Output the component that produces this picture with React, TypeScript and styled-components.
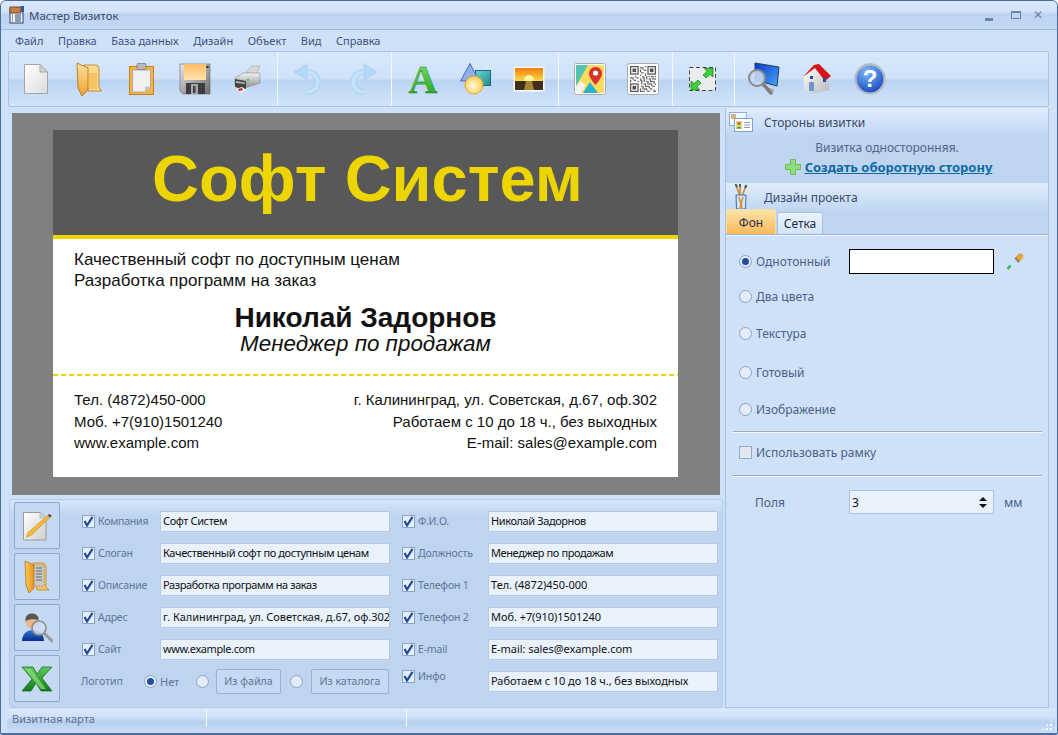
import React from 'react';
import styled, { createGlobalStyle } from 'styled-components';

const UI_FONT = '"Noto Sans", "DejaVu Sans", sans-serif';

const GlobalStyle = createGlobalStyle`
  html, body {
    margin: 0;
    padding: 0;
    background: #fff;
  }
  body {
    font-family: ${UI_FONT};
    font-size: 11px;
  }
  * {
    box-sizing: border-box;
  }
`;

/* ---------- icons ---------- */

function AppIcon() {
  return (
    <svg width="16" height="18" viewBox="0 0 16 18">
      <rect x="1" y="3" width="13" height="14" fill="#f4f6fb" stroke="#27406f" />
      <rect x="1" y="1" width="11" height="6" fill="#c9803f" stroke="#6d4a2a" />
      <rect x="12" y="0" width="3" height="6" fill="#2c57a8" />
      <path d="M3 9h1M6 9h6M3 11h1M6 11h6M3 13h1M6 13h6M3 15h1M6 15h6" stroke="#27406f" />
    </svg>
  );
}

function DocIcon() {
  return (
    <svg width="28" height="34" viewBox="0 0 28 34">
      <defs>
        <linearGradient id="docg" x1="0" y1="0" x2="1" y2="1">
          <stop offset="0" stopColor="#ffffff" />
          <stop offset="1" stopColor="#dcdcdc" />
        </linearGradient>
      </defs>
      <path d="M2.5 2.5H18L25.5 10V31.5H2.5Z" fill="url(#docg)" stroke="#a4a4a4" />
      <path d="M18 2.5V10H25.5Z" fill="#d2d2d2" stroke="#aaa" />
    </svg>
  );
}

function FolderIcon() {
  return (
    <svg width="28" height="36" viewBox="0 0 28 36">
      <defs>
        <linearGradient id="foldg" x1="0" y1="0" x2="0" y2="1">
          <stop offset="0" stopColor="#fde0a0" />
          <stop offset="1" stopColor="#eea22c" />
        </linearGradient>
      </defs>
      <path d="M9 4H22L24 7V27L27 30H13Z" fill="#fcd888" stroke="#b77b1a" strokeWidth=".8" />
      <path d="M2 2L13 7V29L7 35L3 27Z" fill="url(#foldg)" stroke="#a86c12" strokeWidth=".8" />
      <path d="M14 12H22V28H14Z" fill="#f5c266" />
    </svg>
  );
}

function PasteIcon() {
  return (
    <svg width="30" height="34" viewBox="0 0 30 34">
      <rect x="2.5" y="4.5" width="24" height="28" fill="#f6b24b" stroke="#c97f1c" />
      <path d="M5.5 8H23.5V25L18 30H5.5Z" fill="#efefef" stroke="#999" strokeWidth=".7" />
      <path d="M18 30V24.5H23.5Z" fill="#c6c6c6" />
      <rect x="10" y="1.5" width="9" height="6" rx="1" fill="#b9b9b9" stroke="#777" strokeWidth=".7" />
    </svg>
  );
}

function SaveIcon() {
  return (
    <svg width="32" height="32" viewBox="0 0 32 32">
      <defs>
        <linearGradient id="saveg" x1="0" y1="0" x2="0" y2="1">
          <stop offset="0" stopColor="#fdbd63" />
          <stop offset="1" stopColor="#fde3b0" />
        </linearGradient>
        <linearGradient id="savebody" x1="0" y1="0" x2="1" y2="1">
          <stop offset="0" stopColor="#e6e6e6" />
          <stop offset="1" stopColor="#6c6c6c" />
        </linearGradient>
      </defs>
      <path d="M1 1H31V31H4L1 28Z" fill="url(#savebody)" stroke="#666" strokeWidth=".6" />
      <rect x="5" y="1" width="22" height="16" fill="url(#saveg)" />
      <rect x="27.5" y="3" width="2" height="2" fill="#222" />
      <rect x="7" y="20" width="19" height="11" fill="#3d3d3d" />
      <rect x="12" y="21" width="7" height="10" fill="#a9a9a9" />
      <rect x="14" y="23" width="2.5" height="7" fill="#444" />
    </svg>
  );
}

function PrinterIcon() {
  return (
    <svg width="32" height="32" viewBox="0 0 32 32">
      <defs>
        <linearGradient id="printg" x1="0" y1="0" x2="0" y2="1">
          <stop offset="0" stopColor="#f2f2f2" />
          <stop offset="1" stopColor="#8c8c8c" />
        </linearGradient>
      </defs>
      <path d="M14 9L20 3H28L24 12Z" fill="#d8d8d8" stroke="#aaa" strokeWidth=".6" />
      <path d="M3 15L11 10H28L28 20L12 25L3 22Z" fill="url(#printg)" stroke="#777" strokeWidth=".5" />
      <path d="M3 16L14 18V27L3 24Z" fill="#444" />
      <path d="M4 18L13 19.5V21L4 20Z" fill="#b5b5b5" />
      <rect x="15" y="16" width="2" height="2" fill="#35c43d" />
      <path d="M4 26L10 24L15 27L9 30Z" fill="#f1f1f1" />
      <path d="M6 26L10 25L11 27L7 28Z" fill="#d81e1e" />
    </svg>
  );
}

function UndoIcon({ flip }: { flip?: boolean }) {
  return (
    <svg width="32" height="32" viewBox="0 0 32 32" style={flip ? { transform: 'scaleX(-1)' } : undefined}>
      <path d="M12 9.5A10 10 0 1 1 13 29" fill="none" stroke="#b0d6f4" strokeWidth="6.4" />
      <path d="M12 9.5A10 10 0 1 1 13 29" fill="none" stroke="#c6e2f8" strokeWidth="3.4" />
      <path d="M1 9L14 1V17Z" fill="#b4d8f5" stroke="#a6d0f1" strokeWidth=".7" />
    </svg>
  );
}

function LetterIcon() {
  return (
    <svg width="36" height="44" viewBox="0 0 36 44">
      <defs>
        <linearGradient id="letterg" x1="0" y1="0" x2="0" y2="1">
          <stop offset="0" stopColor="#86e46a" />
          <stop offset="1" stopColor="#169b1c" />
        </linearGradient>
      </defs>
      <text x="18" y="36" textAnchor="middle" fontFamily="'Liberation Serif', serif" fontWeight="700" fontSize="40" fill="url(#letterg)" stroke="#1a7f1c" strokeWidth=".4">
        A
      </text>
    </svg>
  );
}

function ShapesIcon() {
  return (
    <svg width="34" height="34" viewBox="0 0 34 34">
      <defs>
        <linearGradient id="shapeg" x1="0" y1="0" x2="1" y2="1">
          <stop offset="0" stopColor="#6fd6d2" />
          <stop offset="1" stopColor="#1f8a92" />
        </linearGradient>
        <radialGradient id="circg" cx=".45" cy=".55" r=".6">
          <stop offset="0" stopColor="#fffbe0" />
          <stop offset="1" stopColor="#f9c945" />
        </radialGradient>
      </defs>
      <rect x="16.5" y="8.5" width="15" height="15" fill="url(#shapeg)" stroke="#146a70" />
      <path d="M11 1.5L20 19H1.5Z" fill="#8fb0ea" stroke="#4a6fb8" />
      <circle cx="15" cy="23" r="9" fill="url(#circg)" stroke="#e3a52a" />
    </svg>
  );
}

function SunsetIcon() {
  return (
    <svg width="32" height="26" viewBox="0 0 32 26">
      <defs>
        <linearGradient id="skyg" x1="0" y1="0" x2="0" y2="1">
          <stop offset="0" stopColor="#f07d0b" />
          <stop offset="1" stopColor="#ffd84a" />
        </linearGradient>
      </defs>
      <rect x=".5" y=".5" width="31" height="25" fill="#fff" stroke="#e8e8e8" />
      <rect x="2" y="2" width="28" height="13" fill="url(#skyg)" />
      <circle cx="16" cy="14" r="5" fill="#fff2a0" />
      <rect x="2" y="15" width="28" height="9" fill="#3f2f1d" />
      <path d="M13 15H19L21 24H11Z" fill="#a98432" />
    </svg>
  );
}

function MapIcon() {
  return (
    <svg width="32" height="32" viewBox="0 0 32 32">
      <rect x=".5" y=".5" width="31" height="31" rx="2" fill="#fff" stroke="#aaa" />
      <rect x="2" y="2" width="28" height="28" fill="#fadb5e" />
      <path d="M2 2H14L2 23Z" fill="#4fc5b0" />
      <path d="M9 30L16 19L24 30Z" fill="#27b3cf" />
      <path d="M2 30V24L6 18L12 22L7 30Z" fill="#f2f2f2" />
      <path d="M21.5 4C17.5 4 15 7 15 10.5C15 15 21.5 22 21.5 22C21.5 22 28 15 28 10.5C28 7 25.5 4 21.5 4Z" fill="#d9322e" />
      <circle cx="21.5" cy="10" r="2.6" fill="#fff" />
    </svg>
  );
}

const QR_BITS = Array.from({ length: 21 * 21 }, (_, i) => (i * i * 7 + i * 13 + ((i * 31) >> 3)) % 5 < 2);

function inFinder(x: number, y: number) {
  return (x < 8 && y < 8) || (x > 12 && y < 8) || (x < 8 && y > 12);
}

function QrIcon() {
  return (
    <svg width="32" height="32" viewBox="0 0 32 32">
      <rect x=".5" y=".5" width="31" height="31" rx="2" fill="#fff" stroke="#aaa" />
      <g fill="#555" transform="translate(3 3) scale(1.24)">
        {QR_BITS.map((on, i) => {
          const x = i % 21;
          const y = Math.floor(i / 21);
          return on && !inFinder(x, y) ? <rect key={i} x={x} y={y} width="1" height="1" /> : null;
        })}
        {[[0, 0], [14, 0], [0, 14]].map(([x, y]) => (
          <g key={`${x}-${y}`}>
            <rect x={x + 0.5} y={y + 0.5} width="6" height="6" fill="none" stroke="#555" />
            <rect x={x + 2} y={y + 2} width="3" height="3" />
          </g>
        ))}
      </g>
    </svg>
  );
}

function ResizeIcon() {
  return (
    <svg width="30" height="28" viewBox="0 0 30 28">
      <rect x="1.5" y="2.5" width="26" height="23" fill="#ececec" stroke="#444" strokeDasharray="4 2.5" />
      <path d="M25 3L25 12L22 9.5L18 13L15 10L19 6.5L16.5 3.5Z" fill="#3fd03f" stroke="#0f7a1a" strokeWidth=".7" />
      <path d="M3 25L3 16L6 18.5L10 15L13 18L9 21.5L11.5 24.5Z" fill="#3fd03f" stroke="#0f7a1a" strokeWidth=".7" />
    </svg>
  );
}

function ScreenIcon() {
  return (
    <svg width="34" height="34" viewBox="0 0 34 34">
      <defs>
        <linearGradient id="scrg" x1="0" y1="0" x2="1" y2="1">
          <stop offset="0" stopColor="#0a3bc8" />
          <stop offset="1" stopColor="#47a7f7" />
        </linearGradient>
      </defs>
      <path d="M8 1L32 5L30 24L8 18Z" fill="url(#scrg)" stroke="#2a3f57" />
      <path d="M18 25L27 27V30L20 30Z" fill="#a8a8a8" opacity=".8" />
      <line x1="16" y1="22" x2="24" y2="31" stroke="#7e7e7e" strokeWidth="3.4" strokeLinecap="round" />
      <circle cx="10" cy="16" r="8" fill="#c7d6f3" fillOpacity=".9" stroke="#8a8a8a" strokeWidth="2" />
    </svg>
  );
}

function HomeIcon() {
  return (
    <svg width="32" height="32" viewBox="0 0 32 32">
      <defs>
        <linearGradient id="homeg" x1="0" y1="0" x2="1" y2="1">
          <stop offset="0" stopColor="#ffffff" />
          <stop offset="1" stopColor="#b8b8b8" />
        </linearGradient>
      </defs>
      <path d="M3 13L13 4L23 10L28 17V27L12 31L3 27Z" fill="url(#homeg)" />
      <path d="M2 14L13 2L18 1L30 13L24 18L14 5Z" fill="#d5141c" />
      <rect x="8" y="19" width="5" height="9" fill="#6e95cf" />
      <rect x="9" y="13" width="3" height="3" fill="#2050a8" />
      <rect x="22" y="15" width="3" height="4" fill="#2050a8" />
    </svg>
  );
}

function HelpIcon() {
  return (
    <svg width="32" height="32" viewBox="0 0 32 32">
      <defs>
        <radialGradient id="helpg" cx=".4" cy=".25" r=".85">
          <stop offset="0" stopColor="#7fb8f5" />
          <stop offset="1" stopColor="#0b3ebd" />
        </radialGradient>
      </defs>
      <circle cx="16" cy="16" r="14.5" fill="url(#helpg)" stroke="#b5b9c2" strokeWidth="2.4" />
      <text x="16" y="24" textAnchor="middle" fontFamily="'Liberation Sans', sans-serif" fontWeight="700" fontSize="24" fill="#fff">
        ?
      </text>
    </svg>
  );
}

function CardsIcon() {
  return (
    <svg width="24" height="20" viewBox="0 0 24 20">
      <rect x=".5" y=".5" width="17" height="13" fill="#f2f7fe" stroke="#8daed7" />
      <rect x="2" y="2" width="5" height="5" fill="#d9b07f" />
      <rect x="5.5" y="6.5" width="18" height="13" fill="#fdfeff" stroke="#7ba3d3" />
      <rect x="7" y="9" width="6" height="8" fill="#ecd67a" />
      <circle cx="10" cy="11.5" r="1.8" fill="#b57a33" />
      <path d="M7.5 16.5C8 14 12 14 12.5 16.5Z" fill="#3a9a4a" />
      <path d="M15 10.5h6M15 13h6M15 15.5h6" stroke="#8b9bb3" />
    </svg>
  );
}

function BrushCupIcon() {
  return (
    <svg width="16" height="26" viewBox="0 0 16 26">
      <path d="M3 1L7 12M13 2L9 12M7 0V12" stroke="#c98b34" strokeWidth="1.6" />
      <path d="M2.5 0L4 3M13.5 1L12 4M7 0V3" stroke="#555" strokeWidth="2" />
      <path d="M3 11H13L12.5 25H3.5Z" fill="#cfe5f8" stroke="#3c6fa8" />
      <path d="M6 13L9 24M10 13L7 24" stroke="#dc8b2b" strokeWidth="1.4" />
    </svg>
  );
}

function PlusIcon() {
  return (
    <svg width="16" height="16" viewBox="0 0 16 16">
      <path d="M5.5 .5H10.5V5.5H15.5V10.5H10.5V15.5H5.5V10.5H.5V5.5H5.5Z" fill="#8fdc7c" stroke="#6dbb5c" />
    </svg>
  );
}

function DropperIcon() {
  return (
    <svg width="18" height="18" viewBox="0 0 18 18">
      <path d="M9 5L13 9" stroke="#777" strokeWidth="2" />
      <path d="M10 4L13 1.5C14 .6 16 1 16.5 2C17 3 17 4 16 5L13.5 8Z" fill="#f5a623" stroke="#c37f10" strokeWidth=".6" />
      <path d="M10 7L3 14" stroke="#bfe6f5" strokeWidth="3" />
      <path d="M4.5 12.5L1.5 16" stroke="#3cb54a" strokeWidth="2.4" />
    </svg>
  );
}

function NoteIcon() {
  return (
    <svg width="32" height="32" viewBox="0 0 32 32">
      <defs>
        <linearGradient id="noteg" x1="0" y1="0" x2="1" y2="1">
          <stop offset="0" stopColor="#ffffff" />
          <stop offset="1" stopColor="#cfcfcf" />
        </linearGradient>
      </defs>
      <path d="M2.5 2.5H19L25 8V30H2.5Z" fill="url(#noteg)" stroke="#9a9a9a" />
      <path d="M19 2.5V8H25Z" fill="#d8d8d8" stroke="#aaa" strokeWidth=".6" />
      <path d="M28.5 4L30.5 6L10 25.5L5.5 27L7 22.5Z" fill="#f4b93a" stroke="#c98a19" strokeWidth=".6" />
      <path d="M28.5 4L30.5 6L29 7.5L27 5.5Z" fill="#2f4a86" />
    </svg>
  );
}

function FolderDocsIcon() {
  return (
    <svg width="26" height="34" viewBox="0 0 26 34">
      <defs>
        <linearGradient id="fdg" x1="0" y1="0" x2="1" y2="0">
          <stop offset="0" stopColor="#fbc95e" />
          <stop offset="1" stopColor="#e7961c" />
        </linearGradient>
      </defs>
      <path d="M9 3H20L22 6V27L25 30H13Z" fill="#f7c465" stroke="#b77b1a" strokeWidth=".7" />
      <path d="M9 5H20V26H9Z" fill="#c9c9c9" stroke="#777" strokeWidth=".5" strokeDasharray="2 1" />
      <path d="M12 8H18M12 11H18M12 14H18M12 17H18M12 20H18" stroke="#666" />
      <path d="M1 1L10 5V28L5 33L2 25Z" fill="url(#fdg)" stroke="#a86c12" strokeWidth=".7" />
    </svg>
  );
}

function UserSearchIcon() {
  return (
    <svg width="32" height="32" viewBox="0 0 32 32">
      <defs>
        <linearGradient id="userg" x1="0" y1="0" x2="0" y2="1">
          <stop offset="0" stopColor="#2f78d8" />
          <stop offset="1" stopColor="#0a2a8a" />
        </linearGradient>
      </defs>
      <path d="M1 29C1 21 7 18 12 18C17 18 23 21 23 29Z" fill="url(#userg)" />
      <circle cx="11" cy="10" r="6.5" fill="#e9b78c" />
      <path d="M4.5 9C4 3 8 1.5 11 1.5C15 1.5 18 4 17.5 8C14 7 8 7 4.5 9Z" fill="#5a5650" />
      <line x1="23" y1="21" x2="31" y2="29" stroke="#9a9a9a" strokeWidth="3" strokeLinecap="round" />
      <circle cx="18" cy="16" r="7" fill="#cfdcf5" fillOpacity=".85" stroke="#8b8b8b" strokeWidth="1.6" />
    </svg>
  );
}

function ExcelIcon() {
  return (
    <svg width="32" height="26" viewBox="0 0 32 26">
      <defs>
        <linearGradient id="xlg" x1="0" y1="0" x2="0" y2="1">
          <stop offset="0" stopColor="#5cc95a" />
          <stop offset="1" stopColor="#127a18" />
        </linearGradient>
      </defs>
      <path d="M1 1H12L16 8L21 1H31L21 12L31 25H20L15 17L10 25H1L11 13Z" fill="url(#xlg)" stroke="#0e6a16" strokeWidth=".7" />
      <path d="M4 3H10L25 23H20Z" fill="#8fe07f" opacity=".7" />
    </svg>
  );
}

/* ---------- window ---------- */

const Window = styled.div`
  width: 1058px;
  height: 735px;
  display: flex;
  flex-direction: column;
  overflow: hidden;
  background: #cfe1f8;
  border: 1px solid #4a6d9c;
  border-bottom-width: 2px;
  border-radius: 6px 6px 2px 2px;
`;

const TitleBar = styled.div`
  height: 29px;
  flex: none;
  display: flex;
  align-items: center;
  padding: 0 14px 0 8px;
  background: linear-gradient(#dbe8fb 0, #d2e3f9 11px, #bcd3f2 13px, #c2d8f4 28px);
  border-bottom: 1px solid #a2bbdb;
`;

const TitleText = styled.span`
  margin-left: 4px;
  font-size: 11.5px;
  color: #3e4a68;
`;

const WindowButtons = styled.div`
  margin-left: auto;
  display: flex;
  align-items: center;
`;

const MinButton = styled.span`
  width: 8px;
  height: 3px;
  margin-top: 8px;
  background: #6c84a6;
`;

const MaxButton = styled.span`
  width: 10px;
  height: 8px;
  margin-left: 18px;
  border: 1px solid #6c84a6;
  border-top-width: 2px;
`;

const CloseGlyph = styled.span`
  margin-left: 12px;
  font-family: 'DejaVu Sans', sans-serif;
  font-size: 12px;
  font-weight: 700;
  line-height: 12px;
  color: #6c84a6;
`;

const MenuBar = styled.div`
  height: 21px;
  flex: none;
  display: flex;
  align-items: center;
  gap: 14.5px;
  padding: 0 0 0 14px;
  color: #3d5180;
`;

const Toolbar = styled.div`
  height: 56px;
  flex: none;
  margin: 0 8px 0 7px;
  display: flex;
  border: 1px solid #a9c3e4;
  border-radius: 2px;
  background: linear-gradient(#d8e8fc 0, #cfe2fa 26px, #bad3f3 29px, #c6dbf6 40px, #d0e3fa 54px);
`;

const ToolGroup = styled.div<{ $pad: number; $width?: number }>`
  display: flex;
  align-items: center;
  padding-left: ${(p) => p.$pad}px;
  width: ${(p) => (p.$width ? `${p.$width}px` : 'auto')};
  flex: ${(p) => (p.$width ? 'none' : 1)};
  border-right: ${(p) => (p.$width ? '1px solid #f2f7fe' : 'none')};
`;

const ToolButton = styled.div`
  width: 53px;
  height: 54px;
  flex: none;
  display: flex;
  align-items: center;
  justify-content: center;
`;

const Main = styled.div`
  flex: 1;
  min-height: 0;
  display: flex;
  padding: 0 7px;
`;

const LeftColumn = styled.div`
  width: 715px;
  flex: none;
  display: flex;
  flex-direction: column;
`;

const Preview = styled.div`
  height: 382px;
  margin: 6px 3px 0 4px;
  padding: 17px 0 0 41px;
  flex: none;
  display: flex;
  align-items: flex-start;
  background: #808080;
`;

const Card = styled.div`
  width: 625px;
  height: 347px;
  display: flex;
  flex-direction: column;
  background: #fff;
  color: #111;
  font-family: 'Liberation Sans', Arial, sans-serif;
`;

const CardHead = styled.div`
  height: 109px;
  flex: none;
  display: flex;
  align-items: center;
  justify-content: center;
  padding: 0 0 8px 4px;
  background: #585858;
  border-bottom: 4px solid #ecd500;
  color: #ecd500;
  font-size: 65px;
  font-weight: 700;
`;

const CardLines = styled.div`
  padding: 10px 21px 0;
  font-size: 17px;
  line-height: 21px;
`;

const CardName = styled.div`
  margin-top: 13px;
  text-align: center;
  font-size: 28px;
  font-weight: 700;
  line-height: 28px;
`;

const CardRole = styled.div`
  margin-top: -1px;
  text-align: center;
  font-size: 22.4px;
  font-style: italic;
  line-height: 26px;
`;

const DashedLine = styled.div`
  height: 2px;
  margin-top: 17px;
  flex: none;
  background: repeating-linear-gradient(90deg, #ecd500 0 5px, transparent 5px 8px);
`;

const CardContacts = styled.div`
  padding: 13px 21px 0;
  display: flex;
  justify-content: space-between;
  font-size: 15px;
  line-height: 21.5px;
`;

const RightAligned = styled.div`
  text-align: right;
`;

/* ---------- data panel ---------- */

const DataPanel = styled.div`
  height: 209px;
  margin: 4px 0 0 1px;
  flex: none;
  display: flex;
  padding: 2px 0 0 4px;
  background: linear-gradient(#d7e6fa 0, #bfd4ef 16px);
  border: 1px solid #b6cdea;
  border-radius: 3px;
`;

const SideButtons = styled.div`
  width: 46px;
  flex: none;
  display: flex;
  flex-direction: column;
  gap: 4px;
`;

const SideButton = styled.div`
  height: 47px;
  flex: none;
  display: flex;
  align-items: center;
  justify-content: center;
  border: 1px solid #8ea9cf;
  border-radius: 2px;
  background: #c5d9f2;
`;

const FormColumn = styled.div<{ $left: number; $labelWidth: number }>`
  width: ${(p) => p.$labelWidth + 230}px;
  flex: none;
  margin-left: ${(p) => p.$left}px;
  padding-top: 3px;
  display: flex;
  flex-direction: column;
  --label-width: ${(p) => p.$labelWidth}px;
`;

const FormRow = styled.div`
  height: 32px;
  display: flex;
  align-items: center;
`;

const FieldLabel = styled.label<{ $shift?: number }>`
  width: var(--label-width);
  flex: none;
  display: flex;
  align-items: center;
  gap: 3px;
  font-size: 10.5px;
  letter-spacing: -0.2px;
  color: #5e7699;
  transform: translateY(${(p) => p.$shift || 0}px);
`;

const Check = styled.span`
  width: 13px;
  height: 13px;
  flex: none;
  display: flex;
  align-items: center;
  justify-content: center;
  border: 1px solid #8da4c4;
  background: #e6eef9;
`;

function CheckMark() {
  return (
    <svg width="11" height="11" viewBox="0 0 11 11">
      <path d="M1.5 5L4 9.5L9.5 .8" fill="none" stroke="#1b4ea3" strokeWidth="2.2" />
    </svg>
  );
}

const FieldValue = styled.div<{ $tight?: boolean }>`
  width: 230px;
  height: 21px;
  flex: none;
  padding: 0 2px;
  overflow: hidden;
  white-space: nowrap;
  line-height: 18px;
  letter-spacing: ${(p) => (p.$tight ? '-0.4px' : '-0.05px')};
  color: #111;
  background: #e8f1fc;
  border: 1px solid #b3c9e6;
`;

const LogoLabel = styled.span`
  width: 62px;
  margin-left: -1px;
  flex: none;
  margin-right: 1px;
  font-size: 10.5px;
  color: #5e7699;
`;

const Radio = styled.span<{ $on?: boolean; $left?: number }>`
  width: 13px;
  height: 13px;
  flex: none;
  margin-left: ${(p) => p.$left || 0}px;
  display: inline-flex;
  align-items: center;
  justify-content: center;
  border: 1px solid #8aa3c6;
  border-radius: 50%;
  background: #e3ecf8;
  &::after {
    content: '';
    width: 7px;
    height: 7px;
    border-radius: 50%;
    background: ${(p) => (p.$on ? '#1d4f9c' : 'transparent')};
  }
`;

const LogoNone = styled.span`
  width: 36px;
  margin-left: 3px;
  color: #5e7699;
`;

const SmallButton = styled.div<{ $width: number; $left: number }>`
  width: ${(p) => p.$width}px;
  height: 25px;
  flex: none;
  margin-left: ${(p) => p.$left}px;
  display: flex;
  align-items: center;
  justify-content: center;
  font-size: 10.6px;
  color: #5e7699;
  background: #c5d9f2;
  border: 1px solid #98b2d6;
  border-radius: 2px;
`;

/* ---------- right panel ---------- */

const RightPanel = styled.div`
  width: 324px;
  margin: 1px 0 1px 2px;
  flex: none;
  display: flex;
  flex-direction: column;
  font-size: 12px;
  background: #cfe1f8;
  border: 1px solid #a9c3e4;
  border-top: none;
`;

const SectionHeader = styled.div<{ $height: number; $drop: number }>`
  height: ${(p) => p.$height}px;
  padding-top: ${(p) => p.$drop}px;
  flex: none;
  display: flex;
  align-items: center;
  color: #3b4a6e;
  background: linear-gradient(#dfecfc, #c3d8f3);
`;

const SectionIcon = styled.span`
  width: 38px;
  flex: none;
  display: flex;
  justify-content: center;
  padding-right: 8px;
`;

const SidesInfo = styled.div`
  height: 48px;
  flex: none;
  display: flex;
  flex-direction: column;
  align-items: center;
  padding-top: 4px;
  gap: 2px;
  background: #bfd4ef;
  color: #50648c;
`;

const CreateLink = styled.div`
  margin-left: 3px;
  display: flex;
  align-items: center;
  gap: 4px;
  font-size: 13px;
  font-weight: 700;
  color: #0f6aa3;
  text-decoration: underline;
`;

const TabStrip = styled.div`
  height: 26px;
  flex: none;
  display: flex;
  align-items: flex-end;
  background: #bfd4ef;
  border-bottom: 1px solid #94b3da;
`;

const Tab = styled.div<{ $active?: boolean }>`
  display: flex;
  align-items: center;
  justify-content: center;
  width: ${(p) => (p.$active ? 50 : 46)}px;
  height: ${(p) => (p.$active ? 25 : 22)}px;
  margin-right: 1px;
  color: #1d2a44;
  background: ${(p) =>
    p.$active ? 'linear-gradient(#fde3a8, #fbb95a)' : 'linear-gradient(#eaf2fc, #d3e3f8)'};
  border: 1px solid ${(p) => (p.$active ? '#f5dcae' : '#a9c3e4')};
  border-bottom: none;
  border-radius: 2px 2px 0 0;
`;

const TabBody = styled.div`
  flex: 1;
  padding: 13px 6px 0 13px;
  display: flex;
  flex-direction: column;
  border-top: 1px solid #f2f7fe;
  color: #4c5f88;
`;

const OptionRow = styled.div<{ $height: number; $after?: number }>`
  height: ${(p) => p.$height}px;
  margin-bottom: ${(p) => p.$after || 0}px;
  flex: none;
  display: flex;
  align-items: center;
  gap: 4px;
`;

const OptionLabel = styled.span`
  width: 89px;
  flex: none;
`;

const ColorBox = styled.div`
  width: 145px;
  height: 25px;
  flex: none;
  background: #fff;
  border: 1px solid #000;
`;

const DropperSlot = styled.span`
  margin-left: 8px;
  display: flex;
`;

const Divider = styled.div`
  height: 2px;
  flex: none;
  margin-left: -6px;
  border-top: 1px solid #a9a9a9;
  border-bottom: 1px solid #f4f8fe;
`;

const FrameCheck = styled.span`
  width: 13px;
  height: 13px;
  flex: none;
  border: 1px solid #94a9c6;
  background: #e2e8f0;
`;

const MarginRow = styled.div`
  height: 50px;
  display: flex;
  align-items: center;
  padding: 0 0 0 16px;
`;

const MarginLabel = styled.span`
  width: 94px;
  flex: none;
`;

const Spinner = styled.div`
  width: 145px;
  height: 24px;
  flex: none;
  display: flex;
  align-items: center;
  justify-content: space-between;
  padding: 0 6px 0 2px;
  color: #111;
  background: #e8f1fc;
  border: 1px solid #a9c3e4;
`;

const SpinArrows = styled.span`
  display: flex;
  flex-direction: column;
  gap: 3px;
`;

const ArrowUp = styled.span`
  width: 0;
  height: 0;
  border: 4px solid transparent;
  border-top: none;
  border-bottom: 4px solid #111;
`;

const ArrowDown = styled.span`
  width: 0;
  height: 0;
  border: 4px solid transparent;
  border-bottom: none;
  border-top: 4px solid #111;
`;

const Unit = styled.span`
  margin-left: 10px;
`;

/* ---------- status bar ---------- */

const StatusBar = styled.div`
  height: 24px;
  flex: none;
  margin: 0 2px 0 6px;
  display: flex;
  position: relative;
  color: #5a6f94;
  background: linear-gradient(#dbe8fb 0, #cfe1f8 8px, #b7cff0 13px, #cbdef8 24px);
`;

const StatusCell = styled.div<{ $width: number }>`
  width: ${(p) => p.$width}px;
  height: 18px;
  flex: none;
  padding: 2px 0 0 5px;
  border-right: 1px solid #f2f7fe;
`;

const Grip = styled.span`
  position: absolute;
  right: 2px;
  bottom: 2px;
  width: 12px;
  height: 12px;
  background-image: radial-gradient(circle, #fff 1px, transparent 1.2px);
  background-size: 4px 4px;
  clip-path: polygon(100% 0, 100% 100%, 0 100%);
`;

interface IField {
  label: string;
  value: string;
  tight?: boolean;
  shift?: number;
}

const leftFields: IField[] = [
  { label: 'Компания', value: 'Софт Систем', tight: true },
  { label: 'Слоган', value: 'Качественный софт по доступным ценам', tight: true },
  { label: 'Описание', value: 'Разработка программ на заказ', tight: true },
  { label: 'Адрес', value: 'г. Калининград, ул. Советская, д.67, оф.302' },
  { label: 'Сайт', value: 'www.example.com', tight: true },
];

const rightFields: IField[] = [
  { label: 'Ф.И.О.', value: 'Николай Задорнов', tight: true },
  { label: 'Должность', value: 'Менеджер по продажам', tight: true },
  { label: 'Телефон 1', value: 'Тел. (4872)450-000' },
  { label: 'Телефон 2', value: 'Моб. +7(910)1501240' },
  { label: 'E-mail', value: 'E-mail: sales@example.com' },
  { label: 'Инфо', value: 'Работаем с 10 до 18 ч., без выходных', shift: -5 },
];

const menuItems = ['Файл', 'Правка', 'База данных', 'Дизайн', 'Объект', 'Вид', 'Справка'];

function Field({ label, value, tight, shift }: IField) {
  return (
    <FormRow>
      <FieldLabel $shift={shift}>
        <Check>
          <CheckMark />
        </Check>
        {label}
      </FieldLabel>
      <FieldValue $tight={tight}>{value}</FieldValue>
    </FormRow>
  );
}

export default function App() {
  return (
    <>
      <GlobalStyle />
      <Window>
        <TitleBar>
          <AppIcon />
          <TitleText>Мастер Визиток</TitleText>
          <WindowButtons>
            <MinButton />
            <MaxButton />
            <CloseGlyph>✕</CloseGlyph>
          </WindowButtons>
        </TitleBar>

        <MenuBar>
          {menuItems.map((item) => (
            <span key={item}>{item}</span>
          ))}
        </MenuBar>

        <Toolbar>
          <ToolGroup $pad={0} $width={269}>
            <ToolButton><DocIcon /></ToolButton>
            <ToolButton><FolderIcon /></ToolButton>
            <ToolButton><PasteIcon /></ToolButton>
            <ToolButton><SaveIcon /></ToolButton>
            <ToolButton><PrinterIcon /></ToolButton>
          </ToolGroup>
          <ToolGroup $pad={4} $width={114}>
            <ToolButton><UndoIcon /></ToolButton>
            <ToolButton><UndoIcon flip /></ToolButton>
          </ToolGroup>
          <ToolGroup $pad={4} $width={167}>
            <ToolButton><LetterIcon /></ToolButton>
            <ToolButton><ShapesIcon /></ToolButton>
            <ToolButton><SunsetIcon /></ToolButton>
          </ToolGroup>
          <ToolGroup $pad={4} $width={114}>
            <ToolButton><MapIcon /></ToolButton>
            <ToolButton><QrIcon /></ToolButton>
          </ToolGroup>
          <ToolGroup $pad={3} $width={62}>
            <ToolButton><ResizeIcon /></ToolButton>
          </ToolGroup>
          <ToolGroup $pad={2}>
            <ToolButton><ScreenIcon /></ToolButton>
            <ToolButton><HomeIcon /></ToolButton>
            <ToolButton><HelpIcon /></ToolButton>
          </ToolGroup>
        </Toolbar>

        <Main>
          <LeftColumn>
            <Preview>
              <Card>
                <CardHead>Софт Систем</CardHead>
                <CardLines>
                  <div>Качественный софт по доступным ценам</div>
                  <div>Разработка программ на заказ</div>
                </CardLines>
                <CardName>Николай Задорнов</CardName>
                <CardRole>Менеджер по продажам</CardRole>
                <DashedLine />
                <CardContacts>
                  <div>
                    <div>Тел. (4872)450-000</div>
                    <div>Моб. +7(910)1501240</div>
                    <div>www.example.com</div>
                  </div>
                  <RightAligned>
                    <div>г. Калининград, ул. Советская, д.67, оф.302</div>
                    <div>Работаем с 10 до 18 ч., без выходных</div>
                    <div>E-mail: sales@example.com</div>
                  </RightAligned>
                </CardContacts>
              </Card>
            </Preview>

            <DataPanel>
              <SideButtons>
                <SideButton><NoteIcon /></SideButton>
                <SideButton><FolderDocsIcon /></SideButton>
                <SideButton><UserSearchIcon /></SideButton>
                <SideButton><ExcelIcon /></SideButton>
              </SideButtons>

              <FormColumn $left={22} $labelWidth={78}>
                {leftFields.map((field) => (
                  <Field key={field.label} {...field} />
                ))}
                <FormRow>
                  <LogoLabel>Логотип</LogoLabel>
                  <Radio $on />
                  <LogoNone>Нет</LogoNone>
                  <Radio />
                  <SmallButton $width={65} $left={7}>Из файла</SmallButton>
                  <Radio $left={9} />
                  <SmallButton $width={78} $left={8}>Из каталога</SmallButton>
                </FormRow>
              </FormColumn>

              <FormColumn $left={12} $labelWidth={86}>
                {rightFields.map((field) => (
                  <Field key={field.label} {...field} />
                ))}
              </FormColumn>
            </DataPanel>
          </LeftColumn>

          <RightPanel>
            <SectionHeader $height={27} $drop={1}>
              <SectionIcon><CardsIcon /></SectionIcon>
              Стороны визитки
            </SectionHeader>
            <SidesInfo>
              <span>Визитка односторонняя.</span>
              <CreateLink>
                <PlusIcon />
                Создать оборотную сторону
              </CreateLink>
            </SidesInfo>
            <SectionHeader $height={26} $drop={2}>
              <SectionIcon><BrushCupIcon /></SectionIcon>
              Дизайн проекта
            </SectionHeader>
            <TabStrip>
              <Tab $active>Фон</Tab>
              <Tab>Сетка</Tab>
            </TabStrip>
            <TabBody>
              <OptionRow $height={25} $after={4}>
                <Radio $on />
                <OptionLabel>Однотонный</OptionLabel>
                <ColorBox />
                <DropperSlot><DropperIcon /></DropperSlot>
              </OptionRow>
              <OptionRow $height={36}><Radio /><span>Два цвета</span></OptionRow>
              <OptionRow $height={38}><Radio /><span>Текстура</span></OptionRow>
              <OptionRow $height={40}><Radio /><span>Готовый</span></OptionRow>
              <OptionRow $height={34} $after={5}><Radio /><span>Изображение</span></OptionRow>
              <Divider />
              <OptionRow $height={38} $after={4}><FrameCheck /><span>Использовать рамку</span></OptionRow>
              <Divider />
              <MarginRow>
                <MarginLabel>Поля</MarginLabel>
                <Spinner>
                  3
                  <SpinArrows>
                    <ArrowUp />
                    <ArrowDown />
                  </SpinArrows>
                </Spinner>
                <Unit>мм</Unit>
              </MarginRow>
            </TabBody>
          </RightPanel>
        </Main>

        <StatusBar>
          <StatusCell $width={200}>Визитная карта</StatusCell>
          <StatusCell $width={200} />
          <Grip />
        </StatusBar>
      </Window>
    </>
  );
}
